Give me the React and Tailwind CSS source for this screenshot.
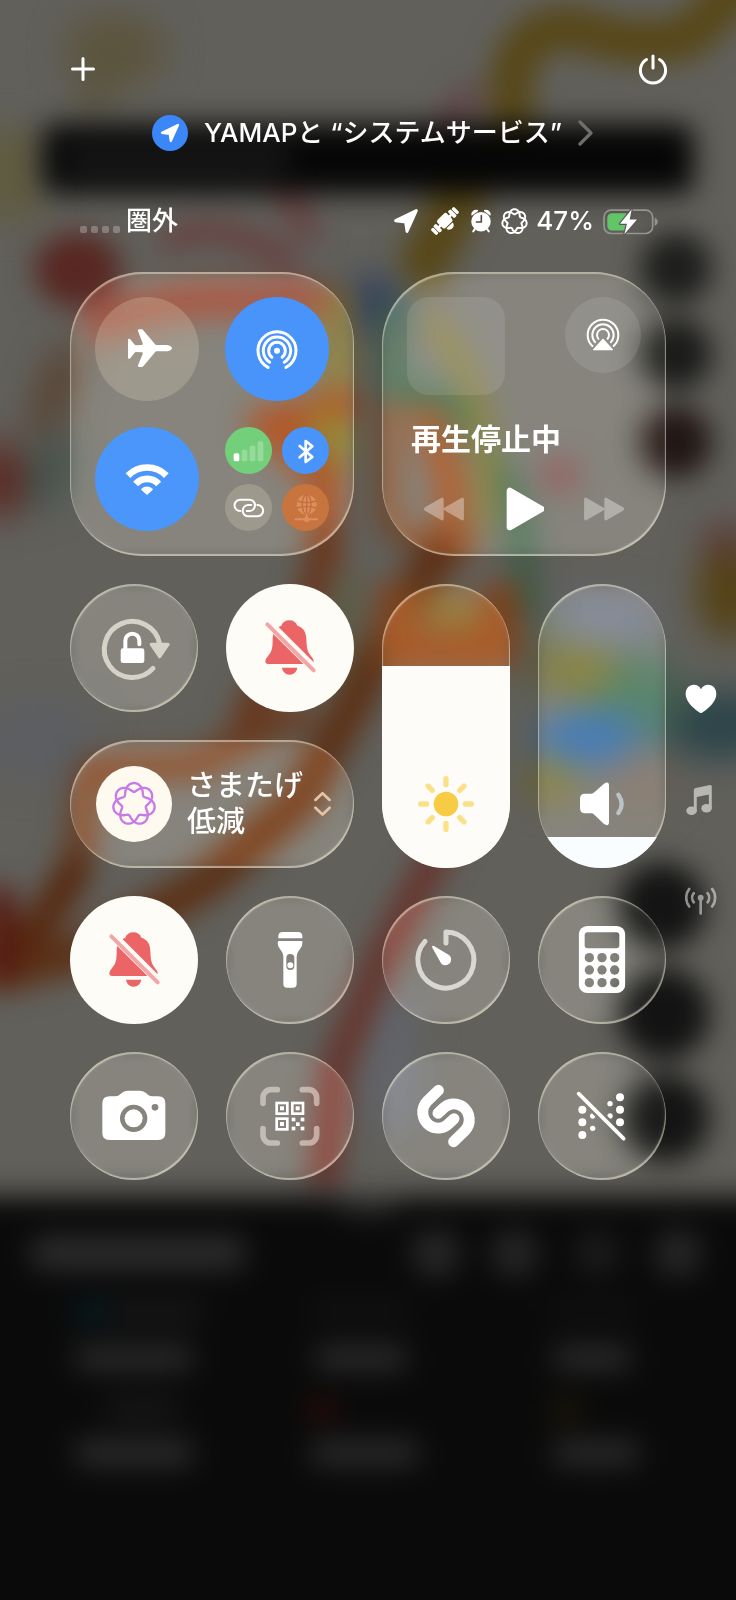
import { useState } from "react";
import clsx from "clsx";

const GLASS =
  "backdrop-blur-[6px] backdrop-brightness-[1.38] backdrop-saturate-[1.05] shadow-[inset_1px_2px_1px_rgba(255,250,225,0.45),inset_-1px_-2px_1px_rgba(255,250,225,0.5),inset_0_0_10px_rgba(255,255,255,0.1)]";

// Closed seven-lobed curve that crosses itself between lobes
function rosette(radius, depth) {
  const points = [];
  for (let i = 0; i < 280; i++) {
    const t = (i / 280) * Math.PI * 4;
    const r = radius + depth * Math.cos(3.5 * t);
    const a = t + 0.07 * Math.sin(3.5 * t);
    const x = r * Math.sin(a);
    const y = -r * Math.cos(a);
    points.push(`${x.toFixed(1)} ${y.toFixed(1)}`);
  }
  return `M${points.join("L")}Z`;
}

const ROSETTE = rosette(49, 13);

// Circle with an opening at the bottom, `gap` is half of the opening in degrees
function arc(cx, cy, r, gap) {
  const a = (gap * Math.PI) / 180;
  const dx = r * Math.sin(a);
  const dy = r * Math.cos(a);
  return `M${cx - dx} ${cy + dy}A${r} ${r} 0 1 1 ${cx + dx} ${cy + dy}`;
}

export default function App() {
  return (
    <div className="relative isolate min-h-screen overflow-hidden bg-[#0a0a0a] font-['Inter','Noto_Sans_CJK_JP',sans-serif] text-white">
      <Wallpaper />

      <header className="flex items-center justify-between px-[67px] pt-[53px]">
        <button className="flex size-8 items-center justify-center" aria-label="追加">
          <svg viewBox="0 0 24 24" className="size-6">
            <path d="M12 1.5v21M1.5 12h21" stroke="white" strokeWidth="3" strokeLinecap="round" />
          </svg>
        </button>
        <button className="flex size-8 items-center justify-center" aria-label="電源">
          <svg viewBox="0 0 32 32" className="size-8" fill="none" stroke="white" strokeWidth="3" strokeLinecap="round">
            <path d="M16 3v12M9.5 6.5a12.6 12.6 0 1 0 13 0" />
          </svg>
        </button>
      </header>

      <a href="#location" className="mt-[30px] flex h-9 items-center justify-center gap-4 pl-[10px]">
        <span className="flex size-9 items-center justify-center rounded-full bg-[#3b87f7]">
          <LocationArrow className="size-5" />
        </span>
        <span className="text-[26px] leading-9 font-medium whitespace-nowrap">
          YAMAPと “システムサービス”
        </span>
        <svg viewBox="0 0 16 26" className="h-[26px] w-4" fill="none">
          <path d="M2 2l11 11L2 24" stroke="#6f6e6d" strokeWidth="3.2" strokeLinecap="round" strokeLinejoin="round" />
        </svg>
      </a>

      <StatusBar />

      <main className="mt-[35px] flex">
        <div className="w-[70px] shrink-0" />
        <div className="grid min-w-0 flex-1 grid-cols-4 gap-7">
          <Connectivity />
          <NowPlaying />
          <RoundButton label="画面縦向きのロック">
            <RotationLockIcon />
          </RoundButton>
          <RoundButton label="消音モード" active>
            <BellIcon />
          </RoundButton>
          <Slider label="明るさ" initial={71} fill="bg-[#fefcf8]" tint="bg-[#9a5c2c]/25">
            <SunIcon />
          </Slider>
          <Slider label="音量" initial={11} fill="bg-[#fafdff]">
            <SpeakerIcon />
          </Slider>
          <Focus />
          <RoundButton label="消音" active>
            <BellIcon />
          </RoundButton>
          <RoundButton label="フラッシュライト">
            <FlashlightIcon />
          </RoundButton>
          <RoundButton label="タイマー">
            <TimerIcon />
          </RoundButton>
          <RoundButton label="計算機">
            <CalculatorIcon />
          </RoundButton>
          <RoundButton label="カメラ">
            <CameraIcon />
          </RoundButton>
          <RoundButton label="コードスキャナー">
            <QrIcon />
          </RoundButton>
          <RoundButton label="ミュージック認識">
            <ShazamIcon />
          </RoundButton>
          <RoundButton label="車両モーションキュー">
            <MotionIcon />
          </RoundButton>
        </div>
        <PageNav />
      </main>
    </div>
  );
}

function StatusBar() {
  return (
    <div className="mt-[54px] flex h-8 items-center justify-between pr-[77px] pl-20">
      <div className="flex items-center gap-[6px]">
        <div className="flex gap-1 pt-4">
          {[0, 1, 2, 3].map((i) => (
            <span key={i} className="size-[7px] rounded-[2px] bg-white/25" />
          ))}
        </div>
        <span className="text-[26px] leading-8 font-medium">圏外</span>
      </div>
      <div className="flex items-center">
        <LocationArrow className="mr-3 size-[26px]" />
        <svg viewBox="149 34 84 84" className="mr-[11px] size-7" fill="white">
          <g transform="rotate(-45 191 76)">
            <rect x="142" y="64" width="10" height="24" rx="4" />
            <rect x="154" y="62" width="12" height="28" rx="4" />
            <rect x="216" y="62" width="12" height="28" rx="4" />
            <rect x="230" y="64" width="10" height="24" rx="4" />
            <rect x="163" y="72" width="56" height="8" />
            <rect x="171" y="58" width="40" height="34" rx="7" />
            <path d="M178 95h26c0 7-5 12-13 12s-13-5-13-12z" />
          </g>
        </svg>
        <svg viewBox="265 36 66 74" className="mr-[9px] h-6 w-[22px]">
          <circle cx="298" cy="75" r="30" fill="white" />
          <path d="M270 54a13 13 0 0 1 17-13zM326 54a13 13 0 0 0-17-13z" fill="white" stroke="white" strokeWidth="4" strokeLinejoin="round" />
          <path d="M279 98l-5 7M317 98l5 7" stroke="white" strokeWidth="6" strokeLinecap="round" />
          <path d="M299 56v20h-15" fill="none" stroke="#54493a" strokeWidth="5" strokeLinecap="round" strokeLinejoin="round" />
        </svg>
        <svg viewBox="-68 -68 136 136" className="mr-2 size-[27px]">
          <path d={ROSETTE} fill="none" stroke="white" strokeWidth="10" />
        </svg>
        <span className="mr-[9px] text-[26px] leading-8 font-medium">47%</span>
        <svg viewBox="666 36 168 80" className="h-[27px] w-14">
          <rect x="669" y="42" width="146" height="70" rx="21" fill="none" stroke="#95948f" strokeWidth="5" />
          <path d="M821 65c6 2 9 6 9 12s-3 10-9 12z" fill="#95948f" />
          <path d="M693 51h43v52h-43a14 14 0 0 1-14-14V65a14 14 0 0 1 14-14z" fill="#62c568" />
          <path
            d="M752 40l-35 43h21l-8 31 38-44h-22z"
            fill="white"
            stroke="#5a5855"
            strokeWidth="7"
            strokeLinejoin="round"
            paintOrder="stroke"
          />
        </svg>
      </div>
    </div>
  );
}

function LocationArrow({ className }) {
  return (
    <svg viewBox="34 34 78 78" className={className}>
      <path
        d="M42 72L104 42 76 104 72 76z"
        fill="white"
        stroke="white"
        strokeWidth="9"
        strokeLinejoin="round"
      />
    </svg>
  );
}

function Connectivity() {
  return (
    <section
      className={clsx(
        "col-span-2 row-span-2 grid grid-cols-2 gap-[26px] rounded-[72px] p-[25px]",
        GLASS,
      )}
    >
      <Toggle label="機内モード" className="bg-[#e8d8c0]/25">
        <svg viewBox="189 197 144 144" className="size-12 overflow-visible">
          <path
            transform="translate(204 208)"
            d="M132 60c0-7-9-11-20-11H88c-4 0-6-1-8-4L47 6c-3-4-5-4-8-4h-5c-3 0-5 2-4 5l14 37c1 4 0 5-3 5l-16 1c-3 0-5-1-6-3L8 33c-1-2-3-3-5-3-2 0-3 1-3 3v54c0 2 1 3 3 3 2 0 4-1 5-3l11-14c1-2 3-3 6-3l16 1c3 0 4 1 3 5l-14 34c-1 3 1 5 4 5h5c3 0 5 0 8-4l33-39c2-3 4-4 8-4h24c11 0 20-4 20-11z"
            fill="white"
          />
        </svg>
      </Toggle>
      <Toggle label="AirDrop" className="bg-[#4894fa]">
        <svg viewBox="577 197 144 144" className="size-12" fill="none" stroke="white" strokeWidth="9" strokeLinecap="round">
          <path d={arc(649, 274, 57, 28)} />
          <path d={arc(649, 274, 41, 32)} />
          <path d={arc(649, 274, 25, 38)} />
          <circle cx="649" cy="274" r="9" fill="white" stroke="none" />
        </svg>
      </Toggle>
      <Toggle label="Wi-Fi" className="bg-[#4b96fa]">
        <svg viewBox="189 585 144 144" className="size-12" fill="none" stroke="white" strokeWidth="20">
          <path d="M204 647a80 80 0 0 1 115 0" />
          <path d="M227 672a46 46 0 0 1 69 0" />
          <path d="M261 702l-15-14a22 22 0 0 1 30 0z" fill="white" strokeWidth="5" strokeLinejoin="round" />
        </svg>
      </Toggle>
      <div className="grid grid-cols-2 gap-[10px]">
        <Toggle label="モバイルデータ通信" className="bg-[#74cf7b]">
          <svg viewBox="511 517 108 108" className="size-9" fill="white">
            <rect x="519" y="578" width="17" height="24" rx="5" />
            <g opacity="0.25">
              <rect x="543" y="567" width="17" height="35" rx="5" />
              <rect x="567" y="555" width="17" height="47" rx="5" />
              <rect x="591" y="542" width="17" height="60" rx="5" />
            </g>
          </svg>
        </Toggle>
        <Toggle label="Bluetooth" className="bg-[#4894fa]">
          <svg viewBox="682 517 108 108" className="size-9">
            <path
              d="M717 556l38 33-20 15v-63l20 16-38 33"
              fill="none"
              stroke="white"
              strokeWidth="8"
              strokeLinecap="round"
              strokeLinejoin="round"
            />
          </svg>
        </Toggle>
        <Toggle label="インターネット共有" className="bg-[#e8d8c0]/25">
          <svg viewBox="511 690 108 108" className="size-9" fill="none" stroke="white" strokeWidth="6" strokeLinecap="round">
            <path d="M539 753a17 17 0 0 1-1-34h28a17 17 0 0 1 0 34h-8" />
            <path d="M590 735a17 17 0 0 1 1 34h-28a17 17 0 0 1 0-34h9" />
          </svg>
        </Toggle>
        <Toggle label="VPN" className="bg-[#c8743f]">
          <svg viewBox="682 690 108 108" className="size-9" opacity="0.55">
            <circle cx="738" cy="734" r="30" fill="#eba47a" />
            <g fill="none" stroke="#c56a36" strokeWidth="4">
              <ellipse cx="738" cy="734" rx="13" ry="30" />
              <path d="M738 704v60M710 723q28 10 56 0M709 744q29-10 58 0" />
            </g>
            <path d="M705 778h64M738 764v14" stroke="#eba47a" strokeWidth="6" strokeLinecap="round" />
            <circle cx="738" cy="778" r="8" fill="#eba47a" />
          </svg>
        </Toggle>
      </div>
    </section>
  );
}

function Toggle({ label, className, children }) {
  return (
    <button
      aria-label={label}
      className={clsx("flex aspect-square w-full items-center justify-center rounded-full", className)}
    >
      {children}
    </button>
  );
}

function NowPlaying() {
  return (
    <section
      className={clsx("col-span-2 row-span-2 flex flex-col rounded-[72px] p-[25px]", GLASS)}
    >
      <div className="flex items-start justify-between">
        <div className="size-[98px] rounded-[22px] bg-white/10" />
        <button
          aria-label="AirPlay"
          className="flex size-[76px] items-center justify-center rounded-full bg-white/10"
        >
          <svg viewBox="648 176 102 102" className="size-[34px]" fill="none" stroke="white" strokeWidth="6" strokeLinecap="round">
            <path d={arc(699, 227, 46, 44)} />
            <path d={arc(699, 227, 32, 48)} />
            <path d={arc(699, 227, 18, 50)} />
            <path d="M699 240l28 31h-56z" fill="white" strokeWidth="4" strokeLinejoin="round" />
          </svg>
        </button>
      </div>
      <p className="mt-[26px] pl-1 text-[30px] leading-9 font-bold">再生停止中</p>
      <div className="mt-[30px] flex items-center justify-between px-4">
        <button aria-label="前へ" className="text-white/35">
          <SkipIcon className="h-6 w-[42px] rotate-180" />
        </button>
        <button aria-label="再生">
          <svg viewBox="406 686 118 132" className="h-11 w-10">
            <path d="M422 697v110l96-55z" fill="white" stroke="white" strokeWidth="18" strokeLinejoin="round" />
          </svg>
        </button>
        <button aria-label="次へ" className="text-white/35">
          <SkipIcon className="h-6 w-[42px]" />
        </button>
      </div>
    </section>
  );
}

function SkipIcon({ className }) {
  return (
    <svg viewBox="638 712 130 76" className={className} fill="currentColor">
      <path d="M640 720q0-9 8-5l50 29q5 3 6 5v-29q0-9 8-5l50 29q10 6 0 12l-50 29q-8 4-8-5v-29q-1 2-6 5l-50 29q-8 4-8-5z" />
    </svg>
  );
}

function RoundButton({ label, active, children }) {
  return (
    <button
      aria-label={label}
      className={clsx(
        "flex aspect-square w-full items-center justify-center rounded-full",
        active ? "bg-[#fefcf6]" : GLASS,
      )}
    >
      {children}
    </button>
  );
}

function Slider({ label, initial, fill, tint, children }) {
  const [value, setValue] = useState(initial);

  return (
    <label
      className={clsx(
        "relative row-span-2 flex items-end justify-center overflow-hidden rounded-full pb-9",
        GLASS,
        tint,
      )}
    >
      <span
        className={clsx("absolute inset-x-0 bottom-0", fill)}
        style={{ height: `${value}%` }}
      />
      <span className="relative">{children}</span>
      <input
        type="range"
        aria-label={label}
        value={value}
        onChange={(e) => setValue(Number(e.target.value))}
        className="absolute inset-0 h-full w-full opacity-0 [direction:rtl] [writing-mode:vertical-lr]"
      />
    </label>
  );
}

function Focus() {
  return (
    <button
      className={clsx(
        "col-span-2 flex aspect-[71/32] items-center rounded-full pr-[22px] pl-[26px] text-left",
        GLASS,
      )}
    >
      <span className="flex size-[76px] shrink-0 items-center justify-center rounded-full bg-[#fefaf0]">
        <svg viewBox="-68 -68 136 136" className="size-[46px]">
          <path d={ROSETTE} fill="none" stroke="#c87be6" strokeWidth="7" />
        </svg>
      </span>
      <span className="ml-[15px] flex-1 text-[29px] leading-9 font-medium whitespace-nowrap">
        さまたげ
        <br />
        低減
      </span>
      <svg viewBox="760 666 56 82" className="h-7 w-[19px] shrink-0" fill="none" stroke="#e6c3a3" strokeWidth="8" strokeLinecap="round" strokeLinejoin="round">
        <path d="M767 695l21-20 21 20M767 718l21 20 21-20" />
      </svg>
    </button>
  );
}

function PageNav() {
  return (
    <nav className="flex w-[70px] shrink-0 flex-col items-center gap-[69px] pt-[411px]">
      <button aria-label="お気に入り">
        <svg viewBox="946 342 94 94" className="size-8">
          <path
            d="M993 430c-3 0-45-26-45-56 0-16 10-27 24-27 9 0 17 5 21 13 4-8 12-13 21-13 14 0 24 11 24 27 0 30-42 56-45 56z"
            fill="white"
          />
        </svg>
      </button>
      <button aria-label="ミュージック" className="opacity-55">
        <svg viewBox="946 642 94 98" className="size-8" fill="white">
          <path d="M971 661q0-6 6-7l43-9q6-1 6 5v66h-9v-42l-37 8v44h-9z" />
          <ellipse cx="964" cy="724" rx="16" ry="13" />
          <ellipse cx="1010" cy="716" rx="16" ry="13" />
        </svg>
      </button>
      <button aria-label="通信" className="opacity-50">
        <svg viewBox="944 943 98 94" className="size-8" fill="none" stroke="white" strokeWidth="8" strokeLinecap="round">
          <path d="M992 981v47M971 966a22 22 0 0 0 0 28M1013 966a22 22 0 0 1 0 28M957 953a44 44 0 0 0 0 54M1027 953a44 44 0 0 1 0 54" />
          <circle cx="992" cy="980" r="9" fill="white" stroke="none" />
        </svg>
      </button>
    </nav>
  );
}

function RotationLockIcon() {
  return (
    <svg viewBox="101 115 240 240" className="size-20" fill="none">
      <path d="M278 296A84 84 0 1 1 298 222" stroke="#d5d2c8" strokeWidth="15" strokeLinecap="round" />
      <path d="M273 224h50l-25 37z" fill="#d5d2c8" stroke="#d5d2c8" strokeWidth="10" strokeLinejoin="round" />
      <rect x="181" y="236" width="71" height="44" rx="7" fill="white" />
      <path d="M195 238v-25a21 21 0 0 1 42 0v11" stroke="white" strokeWidth="12" strokeLinecap="round" />
    </svg>
  );
}

function BellIcon() {
  return (
    <svg viewBox="569 115 240 240" className="size-20">
      <path
        d="M687 152c-12 0-20 6-24 16-18 6-26 20-26 42 0 26-3 34-10 44-6 9-12 14-12 21 0 5 3 8 8 8h129c5 0 8-3 8-8 0-7-6-12-12-21-7-10-9-20-10-46-1-22-8-34-27-40-4-10-12-16-24-16zM665 294h46c-2 12-11 21-23 21s-21-9-23-21z"
        fill="#eb6466"
      />
      <path d="M628 158L768 298" stroke="#fefcf6" strokeWidth="18" />
      <path d="M621 164L760 302" stroke="#fefcf6" strokeWidth="16" />
      <path d="M621 164L760 302" stroke="#f4a5a5" strokeWidth="12" strokeLinecap="round" />
    </svg>
  );
}

function SunIcon() {
  return (
    <svg viewBox="144 620 168 168" className="size-14">
      <circle cx="228" cy="704" r="37" fill="#f7cb43" />
      {[0, 45, 90, 135, 180, 225, 270, 315].map((angle) => (
        <rect
          key={angle}
          x="220"
          y="620"
          width="16"
          height="34"
          rx="7"
          fill="#fae188"
          transform={`rotate(${angle} 228 704)`}
        />
      ))}
    </svg>
  );
}

function SpeakerIcon() {
  return (
    <svg viewBox="612 622 168 168" className="size-14">
      <path
        d="M645 675h19q5 0 9-4l29-26q15-9 15 6v109q0 15-15 6l-29-28q-4-4-9-4h-19q-15 0-15-15v-29q0-15 15-15z"
        fill="white"
      />
      <path d="M745 678q20 28 0 55" fill="none" stroke="#b9c4c6" strokeWidth="13" strokeLinecap="round" />
    </svg>
  );
}

function FlashlightIcon() {
  return (
    <svg viewBox="569 123 240 240" className="size-20" fill="white">
      <path d="M654 178v-6q0-13 13-13h46q13 0 13 13v6zM654 186h72v6q0 8-5 15l-8 12q-4 6-4 14v82q0 11-11 11h-18q-11 0-11-11v-82q0-8-4-14l-8-12q-5-7-5-15z" />
      <rect x="678" y="225" width="24" height="48" rx="12" fill="#84827a" />
      <circle cx="690" cy="259" r="9" />
    </svg>
  );
}

function TimerIcon() {
  return (
    <svg viewBox="108 123 240 240" className="size-20">
      <path
        d="M228 192v-33a84 84 0 1 1-63 28"
        fill="none"
        stroke="#dad6d1"
        strokeWidth="15"
        strokeLinecap="round"
        strokeLinejoin="round"
      />
      <path d="M187 206q-3-8 5-5l46 28a17 17 0 1 1-24 25z" fill="white" />
    </svg>
  );
}

function CalculatorIcon() {
  return (
    <svg viewBox="577 123 240 240" className="size-20">
      <mask id="calculator-keys">
        <rect x="627" y="141" width="140" height="201" rx="26" fill="white" />
        <rect x="645" y="160" width="104" height="48" rx="9" fill="black" />
        {[236, 273, 311].map((y) =>
          [659, 697, 735].map((x) => <circle key={`${x}-${y}`} cx={x} cy={y} r="14" fill="black" />),
        )}
      </mask>
      <rect x="627" y="141" width="140" height="201" fill="white" mask="url(#calculator-keys)" />
    </svg>
  );
}

function CameraIcon() {
  return (
    <svg viewBox="101 591 240 240" className="size-20">
      <mask id="camera-lens">
        <path
          d="M148 652h16q8 0 14-5l7-6q8-6 18-6h35q10 0 18 6l7 6q6 5 14 5h17q21 0 21 21v89q0 21-21 21H147q-21 0-21-21v-89q0-21 22-21z"
          fill="white"
        />
        <circle cx="220" cy="718" r="41" fill="black" />
        <circle cx="220" cy="718" r="27" fill="white" />
        <circle cx="284" cy="685" r="10" fill="black" />
      </mask>
      <rect x="120" y="630" width="200" height="160" fill="white" mask="url(#camera-lens)" />
    </svg>
  );
}

function QrIcon() {
  const finders = [
    [645, 668],
    [692, 668],
    [645, 715],
  ];
  const dots = [
    [694, 716],
    [721, 716],
    [707, 730],
    [694, 743],
    [721, 743],
  ];

  return (
    <svg viewBox="569 591 240 240" className="size-20" fill="none">
      <path
        d="M608 673v-17a24 24 0 0 1 24-24h19M726 632h19a24 24 0 0 1 24 24v17M769 749v19a24 24 0 0 1-24 24h-19M651 792h-19a24 24 0 0 1-24-24v-19"
        stroke="#fff4ec"
        strokeOpacity="0.5"
        strokeWidth="17"
        strokeLinecap="round"
      />
      {finders.map(([x, y]) => (
        <g key={`${x}-${y}`}>
          <rect x={x + 4} y={y + 4} width="32" height="32" stroke="white" strokeWidth="8" />
          <rect x={x + 14} y={y + 14} width="12" height="12" fill="white" />
        </g>
      ))}
      {dots.map(([x, y]) => (
        <rect key={`${x}-${y}`} x={x} y={y} width="11" height="11" fill="white" />
      ))}
    </svg>
  );
}

function ShazamIcon() {
  const stroke = "M205 634L172 666C151 688 155 722 178 739C198 752 220 748 234 736L252 719";

  return (
    <svg viewBox="108 591 240 240" className="size-20" fill="none" stroke="white" strokeWidth="33" strokeLinecap="round">
      <path d={stroke} />
      <path d={stroke} transform="rotate(180 228 711)" />
    </svg>
  );
}

function MotionIcon() {
  const dots = [
    [639, 692, 12],
    [639, 730, 12],
    [639, 768, 12],
    [752, 655, 12],
    [752, 692, 12],
    [752, 730, 12],
    [670, 748, 8],
    [722, 674, 8],
    [670, 711, 8],
    [722, 711, 8],
  ];

  return (
    <svg viewBox="578 591 240 240" className="size-20">
      <mask id="motion-slash">
        <rect x="578" y="591" width="240" height="240" fill="white" />
        <path d="M620 636L772 788" stroke="black" strokeWidth="27" />
      </mask>
      <g mask="url(#motion-slash)" fill="white">
        {dots.map(([x, y, r]) => (
          <circle key={`${x}-${y}`} cx={x} cy={y} r={r} />
        ))}
      </g>
      <path d="M628 644L763 779" stroke="white" strokeWidth="11" strokeLinecap="round" />
    </svg>
  );
}

// Dimmed, out-of-focus map that sits behind the controls
function Wallpaper() {
  return (
    <svg
      viewBox="0 0 736 1600"
      preserveAspectRatio="xMidYMin slice"
      className="absolute inset-0 -z-10 h-full w-full"
      aria-hidden="true"
    >
      <defs>
        <filter id="soft" filterUnits="userSpaceOnUse" x="-80" y="-80" width="900" height="1760" colorInterpolationFilters="sRGB">
          <feGaussianBlur stdDeviation="14" />
        </filter>
        <filter id="softer" filterUnits="userSpaceOnUse" x="-80" y="-80" width="900" height="1760" colorInterpolationFilters="sRGB">
          <feGaussianBlur stdDeviation="18" />
        </filter>
      </defs>
      <rect width="736" height="1600" fill="#61605b" />

      <g filter="url(#softer)" fill="none">
        <ellipse cx="115" cy="50" rx="50" ry="36" fill="#5c543c" />
        <path d="M95 60v60" stroke="#5a543d" strokeWidth="30" />
        <path d="M10 130v90" stroke="#5f5b3e" strokeWidth="60" />
        <ellipse cx="375" cy="305" rx="26" ry="28" fill="#2c3c60" />
        <path d="M50 440q10 30-20 60" stroke="#3f514a" strokeWidth="34" />
        <ellipse cx="0" cy="480" rx="24" ry="40" fill="#5c2620" />
        <path d="M70 350L40 430" stroke="#573a26" strokeWidth="26" />
        <ellipse cx="730" cy="590" rx="32" ry="50" fill="#544013" />
        <ellipse cx="600" cy="620" rx="60" ry="26" fill="#616672" />
        <path d="M540 620v70" stroke="#53583c" strokeWidth="24" />
        <ellipse cx="720" cy="725" rx="60" ry="34" fill="#2c444a" />
        <ellipse cx="635" cy="700" rx="50" ry="46" fill="#42604f" />
        <ellipse cx="580" cy="670" rx="36" ry="26" fill="#64602f" />
        <ellipse cx="590" cy="738" rx="56" ry="26" fill="#325a86" />
        <ellipse cx="550" cy="780" rx="24" ry="18" fill="#6b6222" />
        <ellipse cx="640" cy="780" rx="30" ry="34" fill="#665c54" />
        <ellipse cx="725" cy="540" rx="20" ry="16" fill="#5a3030" />
        <ellipse cx="40" cy="740" rx="60" ry="40" fill="#5c5e62" />
        <ellipse cx="390" cy="1060" rx="30" ry="80" fill="#62646a" />
      </g>

      <g filter="url(#soft)" fill="none" strokeLinecap="round" strokeLinejoin="round">
        <path d="M512 170V80Q520 25 575 28Q640 52 690 36L745-20" stroke="#574718" strokeWidth="44" />
        <path d="M475 170L425 262" stroke="#574718" strokeWidth="50" />
        <path d="M470 95L420 150" stroke="#614448" strokeWidth="24" />
        <path d="M170 240Q220 215 290 262M280 190L310 230" stroke="#683b3a" strokeWidth="20" />
        <ellipse cx="78" cy="270" rx="44" ry="38" fill="#582722" />

        {/* roads */}
        <path d="M100 325Q160 300 210 300H320" stroke="#7a3f30" strokeWidth="34" />
        <path d="M338 300V460" stroke="#6b5f28" strokeWidth="26" />
        <path d="M345 405L262 425Q300 450 325 480V560" stroke="#803f1d" strokeWidth="32" />
        <path d="M325 425l14 14" stroke="#6e6423" strokeWidth="30" />
        <path d="M325 540L310 600L245 720" stroke="#66341a" strokeWidth="28" />
        <path d="M300 715Q235 740 200 765L90 770L75 870" stroke="#6a3a1e" strokeWidth="26" />
        <path d="M350 580L340 700" stroke="#5a5a3c" strokeWidth="16" />
        <path d="M388 400L388 520Q400 550 470 540" stroke="#74401f" strokeWidth="18" />
        <path d="M425 405L450 480V560" stroke="#83441f" strokeWidth="28" />
        <path d="M392 310V390Q440 385 465 420T515 500L530 610" stroke="#3f5a46" strokeWidth="26" />
        <path d="M430 320Q495 390 485 520" stroke="#6c632b" strokeWidth="18" />
        <path d="M440 550L385 640L355 700L300 800L210 880L90 950L0 975" stroke="#5b3016" strokeWidth="38" />
        <path d="M395 600V650H500V600" stroke="#7c421e" strokeWidth="40" />
        <path d="M435 610L465 615" stroke="#706727" strokeWidth="24" />
        <path d="M75 870L40 925L0 960" stroke="#56280f" strokeWidth="34" />
        <path d="M0 900v70" stroke="#56180f" strokeWidth="30" />
        <path d="M450 830L385 950L335 1070L325 1180" stroke="#663029" strokeWidth="28" />
        <ellipse cx="560" cy="475" rx="18" ry="18" fill="#6d4545" />

        {/* floating map buttons */}
        <circle cx="676" cy="268" r="36" fill="#1e1e1d" />
        <circle cx="676" cy="354" r="36" fill="#1b1b1a" />
        <circle cx="676" cy="442" r="36" fill="#211614" />
        <circle cx="662" cy="906" r="44" fill="#141414" />
        <circle cx="664" cy="1014" r="46" fill="#131313" />
        <circle cx="666" cy="1118" r="44" fill="#141414" />

        <rect x="42" y="124" width="652" height="70" rx="14" fill="#060606" />
        <rect x="62" y="146" width="230" height="30" rx="14" fill="#181818" />
      </g>

      {/* bottom sheet */}
      <g filter="url(#soft)">
        <rect x="-60" y="1196" width="860" height="500" fill="#0a0a0a" />
        <rect x="340" y="1200" width="58" height="14" fill="#2e2e2e" />
        <rect x="30" y="1236" width="216" height="34" rx="14" fill="#2c2c2c" />
        <circle cx="436" cy="1253" r="24" fill="#282828" />
        <circle cx="515" cy="1253" r="24" fill="#262626" />
        <circle cx="597" cy="1253" r="22" fill="#1c1c1c" />
        <circle cx="678" cy="1253" r="24" fill="#272727" />
        <rect x="75" y="1302" width="30" height="20" fill="#072027" />
        <rect x="110" y="1302" width="92" height="20" fill="#191919" />
        <rect x="310" y="1302" width="100" height="18" fill="#121212" />
        <rect x="548" y="1302" width="90" height="18" fill="#111111" />
        <rect x="76" y="1346" width="116" height="24" fill="#2c2c2c" />
        <rect x="316" y="1346" width="90" height="24" fill="#2c2c2c" />
        <rect x="554" y="1346" width="76" height="24" fill="#2c2c2c" />
        <rect x="106" y="1400" width="72" height="18" fill="#1a1a1a" />
        <rect x="308" y="1400" width="30" height="20" fill="#2c0b0a" />
        <rect x="552" y="1400" width="28" height="20" fill="#211a07" />
        <rect x="76" y="1440" width="116" height="26" fill="#2c2c2c" />
        <rect x="312" y="1440" width="106" height="26" fill="#2a2a2a" />
        <rect x="554" y="1440" width="84" height="26" fill="#2a2a2a" />
      </g>
    </svg>
  );
}
